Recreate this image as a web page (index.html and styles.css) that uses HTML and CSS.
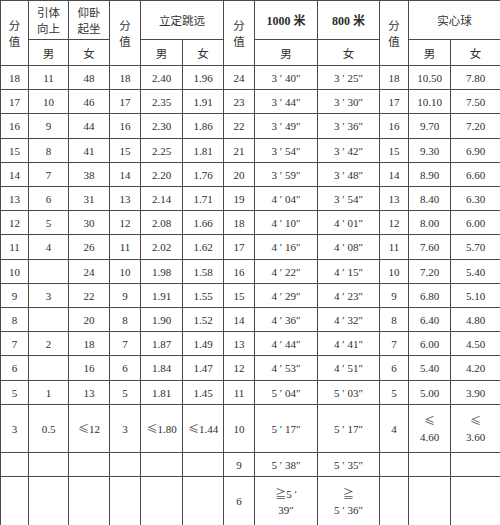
FILE: index.html
```html
<!DOCTYPE html>
<html lang="zh">
<head>
<meta charset="utf-8">
<title>评分表</title>
<link rel="stylesheet" href="styles.css">
</head>
<body>
<table class="score">
  <colgroup>
    <col class="c1"><col class="c2"><col class="c3"><col class="c4"><col class="c5"><col class="c6">
    <col class="c7"><col class="c8"><col class="c9"><col class="c10"><col class="c11"><col class="c12">
  </colgroup>
  <thead>
    <tr class="h1">
      <th rowspan="2" class="zh">分<br>值</th>
      <th class="zh two">引体<br>向上</th>
      <th class="zh two">仰卧<br>起坐</th>
      <th rowspan="2" class="zh">分<br>值</th>
      <th colspan="2" class="zh">立定跳远</th>
      <th rowspan="2" class="zh">分<br>值</th>
      <th class="bold">1000 <span class="zhb">米</span></th>
      <th class="bold">800 <span class="zhb">米</span></th>
      <th rowspan="2" class="zh">分<br>值</th>
      <th colspan="2" class="zh">实心球</th>
    </tr>
    <tr class="h2">
      <th class="zh">男</th>
      <th class="zh">女</th>
      <th class="zh">男</th>
      <th class="zh">女</th>
      <th class="zh">男</th>
      <th class="zh">女</th>
      <th class="zh">男</th>
      <th class="zh">女</th>
    </tr>
  </thead>
  <tbody>
    <tr><td>18</td><td>11</td><td>48</td><td>18</td><td>2.40</td><td>1.96</td><td>24</td><td>3 ′ 40″</td><td>3 ′ 25″</td><td>18</td><td>10.50</td><td>7.80</td></tr>
    <tr><td>17</td><td>10</td><td>46</td><td>17</td><td>2.35</td><td>1.91</td><td>23</td><td>3 ′ 44″</td><td>3 ′ 30″</td><td>17</td><td>10.10</td><td>7.50</td></tr>
    <tr class="tall"><td>16</td><td>9</td><td>44</td><td>16</td><td>2.30</td><td>1.86</td><td>22</td><td>3 ′ 49″</td><td>3 ′ 36″</td><td>16</td><td>9.70</td><td>7.20</td></tr>
    <tr><td>15</td><td>8</td><td>41</td><td>15</td><td>2.25</td><td>1.81</td><td>21</td><td>3 ′ 54″</td><td>3 ′ 42″</td><td>15</td><td>9.30</td><td>6.90</td></tr>
    <tr><td>14</td><td>7</td><td>38</td><td>14</td><td>2.20</td><td>1.76</td><td>20</td><td>3 ′ 59″</td><td>3 ′ 48″</td><td>14</td><td>8.90</td><td>6.60</td></tr>
    <tr><td>13</td><td>6</td><td>31</td><td>13</td><td>2.14</td><td>1.71</td><td>19</td><td>4 ′ 04″</td><td>3 ′ 54″</td><td>13</td><td>8.40</td><td>6.30</td></tr>
    <tr><td>12</td><td>5</td><td>30</td><td>12</td><td>2.08</td><td>1.66</td><td>18</td><td>4 ′ 10″</td><td>4 ′ 01″</td><td>12</td><td>8.00</td><td>6.00</td></tr>
    <tr class="tall"><td>11</td><td>4</td><td>26</td><td>11</td><td>2.02</td><td>1.62</td><td>17</td><td>4 ′ 16″</td><td>4 ′ 08″</td><td>11</td><td>7.60</td><td>5.70</td></tr>
    <tr><td>10</td><td></td><td>24</td><td>10</td><td>1.98</td><td>1.58</td><td>16</td><td>4 ′ 22″</td><td>4 ′ 15″</td><td>10</td><td>7.20</td><td>5.40</td></tr>
    <tr><td>9</td><td>3</td><td>22</td><td>9</td><td>1.91</td><td>1.55</td><td>15</td><td>4 ′ 29″</td><td>4 ′ 23″</td><td>9</td><td>6.80</td><td>5.10</td></tr>
    <tr><td>8</td><td></td><td>20</td><td>8</td><td>1.90</td><td>1.52</td><td>14</td><td>4 ′ 36″</td><td>4 ′ 32″</td><td>8</td><td>6.40</td><td>4.80</td></tr>
    <tr><td>7</td><td>2</td><td>18</td><td>7</td><td>1.87</td><td>1.49</td><td>13</td><td>4 ′ 44″</td><td>4 ′ 41″</td><td>7</td><td>6.00</td><td>4.50</td></tr>
    <tr class="tall"><td>6</td><td></td><td>16</td><td>6</td><td>1.84</td><td>1.47</td><td>12</td><td>4 ′ 53″</td><td>4 ′ 51″</td><td>6</td><td>5.40</td><td>4.20</td></tr>
    <tr><td>5</td><td>1</td><td>13</td><td>5</td><td>1.81</td><td>1.45</td><td>11</td><td>5 ′ 04″</td><td>5 ′ 03″</td><td>5</td><td>5.00</td><td>3.90</td></tr>
    <tr class="big"><td>3</td><td>0.5</td><td><span class="cmp">≤</span>12</td><td>3</td><td><span class="cmp">≤</span>1.80</td><td><span class="cmp">≤</span>1.44</td><td>10</td><td>5 ′ 17″</td><td>5 ′ 17″</td><td>4</td><td><span class="cmp">≤</span><br>4.60</td><td><span class="cmp">≤</span><br>3.60</td></tr>
    <tr><td></td><td></td><td></td><td></td><td></td><td></td><td>9</td><td>5 ′ 38″</td><td>5 ′ 35″</td><td></td><td></td><td></td></tr>
    <tr class="last"><td></td><td></td><td></td><td></td><td></td><td></td><td>6</td><td><span class="cmp">≧</span>5 ′<br>39″</td><td><span class="cmp">≧</span><br>5 ′ 36″</td><td></td><td></td><td></td></tr>
  </tbody>
</table>
</body>
</html>
```
FILE: styles.css
```css
html, body {
  margin: 0;
  padding: 0;
  background: #ffffff;
}
body {
  width: 500px;
  height: 525px;
  overflow: hidden;
}
.score {
  border-collapse: collapse;
  table-layout: fixed;
  width: 500px;
  font-family: "Liberation Serif", "Noto Sans CJK SC", serif;
  font-size: 11px;
  color: #2e2e2e;
}
.score th, .score td {
  border: 1px solid #4a4a4a;
  padding: 0;
  text-align: center;
  vertical-align: middle;
  font-weight: normal;
  line-height: 16px;
}
.c1 { width: 28px; }
.c2 { width: 40px; }
.c3 { width: 41px; }
.c4 { width: 31px; }
.c5 { width: 42px; }
.c6 { width: 41px; }
.c7 { width: 31px; }
.c8 { width: 63px; }
.c9 { width: 62px; }
.c10 { width: 29px; }
.c11 { width: 42px; }
.c12 { width: 50px; }
.zh {
  font-family: "Noto Sans CJK SC", sans-serif;
  font-size: 11.5px;
  line-height: 17px;
  color: #333333;
}
.two {
  line-height: 16.7px;
}
.bold {
  font-weight: bold !important;
  font-size: 12px;
}
.zhb {
  font-family: "Noto Sans CJK SC", sans-serif;
  font-weight: bold;
}
.cmp {
  font-family: "Noto Sans CJK SC", sans-serif;
  color: #555555;
}
.h1 { height: 39px; }
.h2 { height: 26px; }
tbody tr { height: 24px; }
tbody tr.tall { height: 25px; }
tbody tr.big { height: 48px; }
tbody tr.last { height: 49px; }
```
